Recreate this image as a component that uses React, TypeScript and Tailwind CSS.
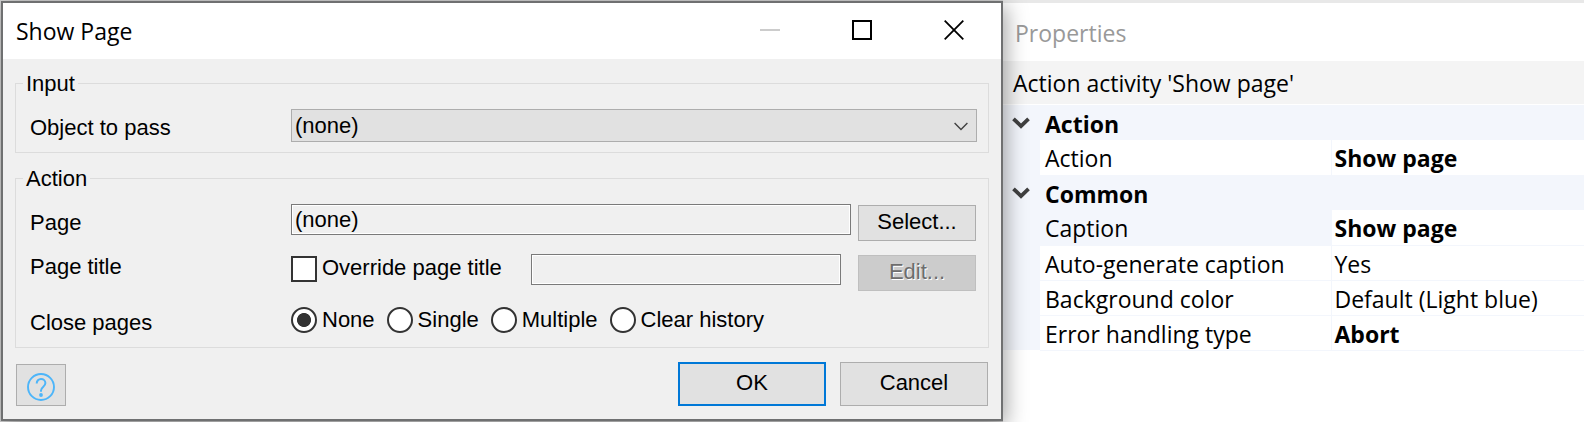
import { useState } from "react";
import type { ReactNode } from "react";

const BUTTON = "flex items-center justify-center border border-[#adadad] bg-[#e1e1e1] pb-[3px] text-[22px] leading-[26px] text-black";
const FIELD = "h-[31px] w-full min-w-0 border border-[#7a7a7a] bg-[#f0f0f0] px-[3px] text-[22px] leading-[26px] text-black shadow-[inset_0_0_0_1px_#ffffff]";
const FIELDSET = "min-w-0 border border-[#dcdcdc] pl-[14px]";
const LEGEND = "-ml-[7px] px-[3px] pt-[2px] leading-6";
const ROW = "grid grid-cols-[261px_minmax(0,1fr)] items-start";

const CLOSE_OPTIONS = ["None", "Single", "Multiple", "Clear history"];

type Property = { name: string; value: string; bold?: boolean; selected?: boolean };

const GROUPS: { title: string; items: Property[] }[] = [
  { title: "Action", items: [{ name: "Action", value: "Show page", bold: true }] },
  {
    title: "Common",
    items: [
      { name: "Caption", value: "Show page", bold: true, selected: true },
      { name: "Auto-generate caption", value: "Yes" },
      { name: "Background color", value: "Default (Light blue)" },
      { name: "Error handling type", value: "Abort", bold: true },
    ],
  },
];

function WindowButton({ label, disabled, children }: { label: string; disabled?: boolean; children: ReactNode }) {
  return (
    <button type="button" aria-label={label} disabled={disabled} className="flex h-full w-23 items-center justify-center">
      <svg width="20" height="20" viewBox="0 0 20 20" fill="none" aria-hidden="true">
        {children}
      </svg>
    </button>
  );
}

function ShowPageDialog() {
  const [closePages, setClosePages] = useState("None");
  return (
    <section
      role="dialog"
      aria-labelledby="dialog-title"
      className="relative z-10 mt-px mb-px ml-px flex flex-col border-2 border-[#6f7071] bg-[#f0f0f0] font-['Liberation_Sans',Arial,sans-serif] text-[22px] leading-[26px] text-black shadow-[3px_5px_20px_rgba(0,0,0,0.36)]"
    >
      <header className="flex h-14 items-center justify-between bg-white pr-px pl-[13px]">
        <h1 id="dialog-title" className="font-['Open_Sans','Noto_Sans',sans-serif] text-[23px] leading-8">
          Show Page
        </h1>
        <div className="flex h-full pb-[2px]">
          <WindowButton label="Minimize" disabled>
            <path d="M0 10H20" stroke="#cccccc" strokeWidth="2" />
          </WindowButton>
          <WindowButton label="Maximize">
            <rect x="1" y="1" width="18" height="18" stroke="#000000" strokeWidth="2" />
          </WindowButton>
          <WindowButton label="Close">
            <path d="M.7 .7 19.3 19.3M19.3 .7 .7 19.3" stroke="#000000" strokeWidth="1.8" />
          </WindowButton>
        </div>
      </header>

      <form className="flex flex-col gap-3 px-3 pt-[11px]" onSubmit={(e) => e.preventDefault()}>
        <fieldset className={`${FIELDSET} pr-[11px]`}>
          <legend className={LEGEND}>Input</legend>
          <div className="grid grid-cols-[261px_minmax(0,1fr)] items-center pt-[13px] pb-[10px]">
            <label htmlFor="object" className="pt-1">
              Object to pass
            </label>
            <div className="relative">
              <select
                id="object"
                className="block h-[33px] w-full appearance-none border border-[#adadad] bg-[#e1e1e1] px-[3px] pt-px text-[22px] leading-[26px] text-black"
              >
                <option>(none)</option>
              </select>
              <svg
                className="pointer-events-none absolute top-[13px] right-[9px]"
                width="14"
                height="9"
                viewBox="0 0 14 9"
                fill="none"
                aria-hidden="true"
              >
                <path d="M.6 1 7 7.4 13.4 1" stroke="#404040" strokeWidth="1.4" />
              </svg>
            </div>
          </div>
        </fieldset>

        <fieldset className={`${FIELDSET} pr-3`}>
          <legend className={LEGEND}>Action</legend>
          <div className="pt-[13px] pb-[11px]">
            <div className={ROW}>
              <label htmlFor="page" className="self-center">
                Page
              </label>
              <div className="flex items-start gap-[7px]">
                <input id="page" type="text" readOnly value="(none)" className={FIELD} />
                <button type="button" className={`${BUTTON} mt-px h-9 w-[118px] shrink-0`}>
                  Select...
                </button>
              </div>
            </div>

            <div className={`${ROW} mt-[13px]`}>
              <span>Page title</span>
              <div className="flex items-start gap-[17px]">
                <div className="grid flex-1 grid-cols-[240px_minmax(0,1fr)] items-start">
                  <label className="flex items-center gap-[5px] pt-[2px]">
                    <input
                      type="checkbox"
                      className="size-[26px] shrink-0 appearance-none border-2 border-[#333333] bg-white checked:bg-[#333333]"
                    />
                    <span className="pb-[2px] leading-6 whitespace-nowrap">Override page title</span>
                  </label>
                  <input type="text" aria-label="Page title text" disabled className={FIELD} />
                </div>
                <button
                  type="button"
                  disabled
                  className="mt-px flex h-9 w-[118px] shrink-0 items-center justify-center border border-[#bfbfbf] bg-[#cccccc] pb-[3px] text-[#6d6d6d] [text-shadow:1px_1px_0_#ffffff]"
                >
                  Edit...
                </button>
              </div>
            </div>

            <div className={`${ROW} mt-4`}>
              <span id="close-pages" className="pt-[3px]">
                Close pages
              </span>
              <div role="radiogroup" aria-labelledby="close-pages" className="flex flex-wrap gap-x-3">
                {CLOSE_OPTIONS.map((option) => (
                  <label key={option} className="flex gap-[5px]">
                    <input
                      type="radio"
                      name="close"
                      checked={closePages === option}
                      onChange={() => setClosePages(option)}
                      className="size-[26px] appearance-none rounded-full border-2 border-[#333333] bg-white checked:bg-[radial-gradient(circle,#333333_6.6px,#ffffff_7.4px)]"
                    />
                    {option}
                  </label>
                ))}
              </div>
            </div>
          </div>
        </fieldset>
      </form>

      <footer className="flex items-end gap-[14px] px-[13px] pt-[14px] pb-[13px]">
        <button
          type="button"
          aria-label="Help"
          className="mr-auto flex h-[42px] w-[50px] items-center justify-center border border-[#adadad] bg-[#e1e1e1] pt-1"
        >
          <svg width="28" height="28" viewBox="0 0 28 28" fill="none" aria-hidden="true">
            <circle cx="14" cy="14" r="13" stroke="#4db5f9" strokeWidth="1.9" />
            <path
              d="M9.7 10.6C9.7 7.9 11.5 6 14 6s4.4 1.7 4.4 4.1c0 2-1 2.9-2.3 4-1.3 1.1-2.1 2-2.1 3.4v1.3"
              stroke="#4db5f9"
              strokeWidth="2"
            />
            <circle cx="14" cy="22" r="1.9" fill="#4db5f9" />
          </svg>
        </button>
        <button
          type="button"
          className="flex h-11 w-[148px] items-center justify-center border-2 border-[#0078d7] bg-[#e1e1e1] pb-[3px]"
        >
          OK
        </button>
        <button type="button" className={`${BUTTON} h-11 w-[148px]`}>
          Cancel
        </button>
      </footer>
    </section>
  );
}

function PropertiesPanel() {
  const [collapsed, setCollapsed] = useState<string[]>([]);
  const toggle = (title: string) =>
    setCollapsed((list) => (list.includes(title) ? list.filter((t) => t !== title) : [...list, title]));

  return (
    <aside className="min-w-0 border-t-3 border-[#e8e8e8] bg-white font-['Open_Sans','Noto_Sans',sans-serif] text-[23px] leading-[34px] text-black">
      <h2 className="pt-[13px] pb-[11px] pl-3 text-[#999999]">Properties</h2>
      <p className="border-b border-white bg-[#f4f4f4] pt-[5px] pb-1 pl-[10px]">Action activity 'Show page'</p>
      <table className="w-full table-fixed border-collapse text-left leading-[31px]">
        <colgroup>
          <col className="w-[37px]" />
          <col className="w-[291px]" />
          <col />
        </colgroup>
        {GROUPS.map((group) => (
          <tbody key={group.title}>
            <tr className="h-[35px] bg-[#f3f6fc]">
              <td className="p-0">
                <button
                  type="button"
                  aria-label={`Toggle ${group.title}`}
                  aria-expanded={!collapsed.includes(group.title)}
                  onClick={() => toggle(group.title)}
                  className="flex w-full items-center justify-center pr-[2px]"
                >
                  <svg width="18" height="12" viewBox="0 0 18 12" fill="none" aria-hidden="true">
                    <path d="M1.5 1.8 9 9 16.5 1.8" stroke="#404040" strokeWidth="3.8" />
                  </svg>
                </button>
              </td>
              <th colSpan={2} scope="rowgroup" className="p-0 pt-[3px] pl-[5px] font-bold">
                {group.title}
              </th>
            </tr>
            {!collapsed.includes(group.title) &&
              group.items.map((item) => (
                <tr key={item.name} className="h-[35px]">
                  <td className="bg-[#f3f6fc] p-0" />
                  <th
                    scope="row"
                    className={`border-r border-b border-[#f3f6fc] p-0 pt-[3px] pl-[5px] font-normal whitespace-nowrap ${item.selected ? "bg-[#f3f6fc]" : "bg-white"}`}
                  >
                    {item.name}
                  </th>
                  <td
                    className={`border-b border-[#f3f6fc] bg-white p-0 pt-[3px] pl-[3px] whitespace-nowrap ${item.bold ? "font-bold" : "font-normal"}`}
                  >
                    {item.value}
                  </td>
                </tr>
              ))}
          </tbody>
        ))}
      </table>
    </aside>
  );
}

export default function App() {
  return (
    <main className="grid min-h-screen grid-cols-[1003fr_581fr] items-stretch bg-[#d2d2d2]">
      <ShowPageDialog />
      <PropertiesPanel />
    </main>
  );
}
